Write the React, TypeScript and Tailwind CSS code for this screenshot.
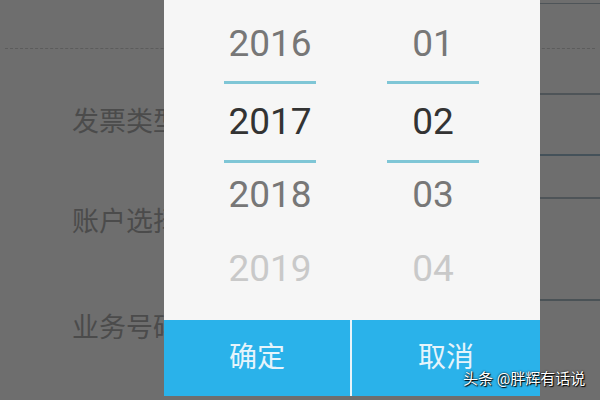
import React from "react";

const years = [
  { v: "2016", c: "text-[#777777]" },
  { v: "2017", c: "text-[#333333]" },
  { v: "2018", c: "text-[#777777]" },
  { v: "2019", c: "text-[#c9c9c9]" },
];

const months = [
  { v: "01", c: "text-[#777777]" },
  { v: "02", c: "text-[#333333]" },
  { v: "03", c: "text-[#777777]" },
  { v: "04", c: "text-[#c9c9c9]" },
];

function Wheel({ items, x }: { items: { v: string; c: string }[]; x: string }) {
  return (
    <div className={"flex flex-col items-center w-[92px] pt-[7px] " + x}>
      <div className={"h-[74px] flex items-center text-[37px] " + items[0].c}>{items[0].v}</div>
      <div className="h-[3px] w-[92px] bg-[#7fc6d6]" />
      <div className={"h-[76px] flex items-center text-[37px] " + items[1].c}>{items[1].v}</div>
      <div className="h-[3px] w-[92px] bg-[#7fc6d6]" />
      <div className={"h-[64px] flex items-center text-[37px] " + items[2].c}>{items[2].v}</div>
      <div className={"h-[84px] flex items-center text-[37px] " + items[3].c}>{items[3].v}</div>
    </div>
  );
}

export default function App() {
  return (
    <div
      className="relative w-[600px] h-[400px] overflow-hidden bg-[#6e6e6e]"
      style={{ fontFamily: "Roboto, 'Noto Sans CJK SC', sans-serif" }}
    >
      {/* page underneath the dim */}
      <div className="flex flex-col">
        <div className="h-[3px]" />
        <div className="h-[1px] ml-[170px] bg-[#4e5458]" />
        <div className="h-[44px]" />
        <div className="h-0 mx-[5px] border-t border-dashed border-[#5c5c5c]" />
        <div className="h-[44px]" />
        <div className="h-[2px] ml-[170px] bg-[#4e5458]" />
        <div className="h-[59px] relative">
          <span className="absolute left-[72px] top-[7px] text-[27px] text-[#4b4b4b]">发票类型</span>
        </div>
        <div className="h-[2px] ml-[170px] bg-[#445159]" />
        <div className="h-[41px]" />
        <div className="h-[2px] ml-[170px] bg-[#4e5458]" />
        <div className="h-[100px] flex items-center">
          <span className="ml-[72px] mt-[-54px] text-[27px] text-[#4b4b4b]">账户选择</span>
        </div>
        <div className="h-[2px] ml-[170px] bg-[#4a5256]" />
        <div className="flex items-center h-[60px]">
          <span className="ml-[72px] mt-[-6px] text-[27px] text-[#4b4b4b]">业务号码</span>
        </div>
      </div>

      {/* dialog */}
      <div className="absolute left-[164px] top-0 w-[376px] h-[396px] bg-[#f6f6f6] flex flex-col">
        <div className="h-[320px] flex overflow-hidden">
          <Wheel items={years} x="ml-[60px]" />
          <Wheel items={months} x="ml-[71px]" />
        </div>
        <div className="flex-1 flex bg-[#2ab2ea]">
          <div className="w-[186px] flex items-center justify-center text-[28px] text-[#e6f4fb]">确定</div>
          <div className="w-[2px] bg-[#e8f4fa]" />
          <div className="flex-1 flex items-center justify-center text-[28px] text-[#e6f4fb]">取消</div>
        </div>
      </div>

      {/* watermark */}
      <div className="absolute left-[463px] top-[368px] text-[15px] text-white [text-shadow:0_0_2px_#000,1px_1px_1px_#000]">
        头条 @胖辉有话说
      </div>
    </div>
  );
}
